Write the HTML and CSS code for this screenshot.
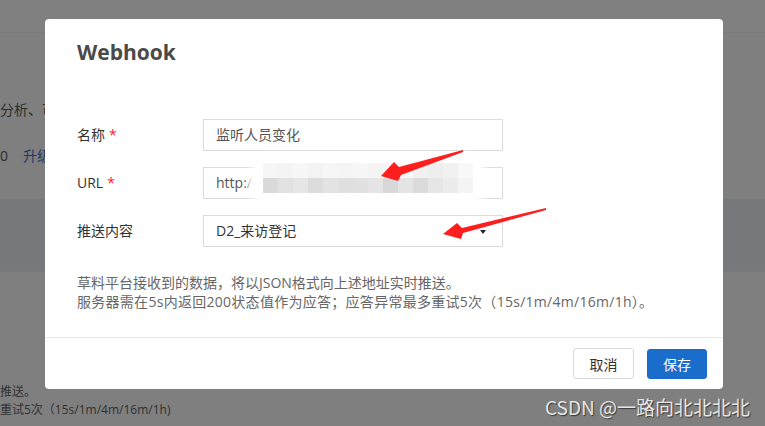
FILE: index.html
```html
<!DOCTYPE html>
<html lang="zh-CN">
<head>
<meta charset="utf-8">
<title>Webhook</title>
<link rel="stylesheet" href="styles.css">
</head>
<body>
<div class="page">
  <div class="pg-top"></div>
  <div class="pg-main">
    <p class="pg-line pg-l1">分析、可视化和数据对接</p>
    <p class="pg-line pg-l2"><span class="pg-num">0</span><span class="pg-link">升级版本</span></p>
  </div>
  <div class="pg-band"></div>
  <div class="pg-foot">
    <p class="pg-small pg-s1">推送。</p>
    <p class="pg-small">重试5次（15s/1m/4m/16m/1h)</p>
  </div>
</div>

<div class="modal">
  <div class="modal-head">
    <h2 class="modal-title">Webhook</h2>
  </div>
  <div class="modal-body">
    <div class="form">
      <label class="f-label">名称<span class="req">*</span></label>
      <div class="f-input">监听人员变化</div>
      <label class="f-label">URL<span class="req">*</span></label>
      <div class="f-input">http:/</div>
      <label class="f-label">推送内容</label>
      <div class="f-input f-select"><span class="sel-text">D2_来访登记</span><span class="caret"></span></div>
    </div>
    <p class="desc">草料平台接收到的数据，将以JSON格式向上述地址实时推送。<br><span class="desc-l2">服务器需在5s内返回200状态值作为应答；应答异常最多重试5次（15s/1m/4m/16m/1h）。</span></p>
  </div>
  <div class="modal-foot">
    <button class="btn btn-default">取消</button>
    <button class="btn btn-primary">保存</button>
  </div>
</div>

<svg class="marks" width="765" height="426" viewBox="0 0 765 426" xmlns="http://www.w3.org/2000/svg">
  <defs>
    <filter id="soft" x="-20%" y="-50%" width="140%" height="200%">
      <feGaussianBlur stdDeviation="3.5"/>
    </filter>
    <filter id="soft2" x="-5%" y="-20%" width="110%" height="140%">
      <feGaussianBlur stdDeviation="0.6"/>
    </filter>
  </defs>
  <rect x="248" y="156" width="240" height="51" rx="23" fill="#ffffff" filter="url(#soft)"/>
  <g filter="url(#soft2)">
    <rect x="263" y="163" width="15" height="15" fill="#f6f6f6"/>
    <rect x="278" y="163" width="15" height="15" fill="#f4f4f4"/>
    <rect x="293" y="163" width="15" height="15" fill="#f7f7f7"/>
    <rect x="308" y="163" width="15" height="15" fill="#f3f3f3"/>
    <rect x="323" y="163" width="15" height="15" fill="#f6f6f6"/>
    <rect x="338" y="163" width="15" height="15" fill="#f5f5f5"/>
    <rect x="353" y="163" width="15" height="15" fill="#f7f7f7"/>
    <rect x="368" y="163" width="15" height="15" fill="#f4f4f4"/>
    <rect x="383" y="163" width="15" height="15" fill="#f7f7f7"/>
    <rect x="398" y="163" width="15" height="15" fill="#f8f8f8"/>
    <rect x="413" y="163" width="15" height="15" fill="#f1f1f1"/>
    <rect x="428" y="163" width="15" height="15" fill="#eeeeee"/>
    <rect x="443" y="163" width="15" height="15" fill="#f1f1f1"/>
    <rect x="458" y="163" width="15" height="15" fill="#f8f8f8"/>
    <rect x="263" y="178" width="15" height="15" fill="#dadada"/>
    <rect x="278" y="178" width="15" height="15" fill="#e2e2e2"/>
    <rect x="293" y="178" width="15" height="15" fill="#e6e6e6"/>
    <rect x="308" y="178" width="15" height="15" fill="#dcdcdc"/>
    <rect x="323" y="178" width="15" height="15" fill="#e3e3e3"/>
    <rect x="338" y="178" width="15" height="15" fill="#dfdfdf"/>
    <rect x="353" y="178" width="15" height="15" fill="#e1e1e1"/>
    <rect x="368" y="178" width="15" height="15" fill="#e5e5e5"/>
    <rect x="383" y="178" width="15" height="15" fill="#d8d8d8"/>
    <rect x="398" y="178" width="15" height="15" fill="#e4e4e4"/>
    <rect x="413" y="178" width="15" height="15" fill="#dbdbdb"/>
    <rect x="428" y="178" width="15" height="15" fill="#e6e6e6"/>
    <rect x="443" y="178" width="15" height="15" fill="#ececec"/>
    <rect x="458" y="178" width="15" height="15" fill="#f4f4f4"/>
  </g>
  <polygon points="463,150 399,167 394,162 381,176 398,181 401,175 463,152" fill="#ff1e1e"/>
  <polygon points="546,208 462,228 457,223 443,234 461,239 463,233 546,210" fill="#ff1e1e"/>
</svg>

<div class="watermark">CSDN @一路向北北北北</div>
</body>
</html>
```

FILE: styles.css
```css
* { box-sizing: border-box; }
html, body { margin: 0; padding: 0; }
body {
  width: 765px;
  height: 426px;
  overflow: hidden;
  background: #7f7f7f;
  font-family: "Open Sans", "Noto Sans CJK SC", sans-serif;
  position: relative;
}

/* underlying (dimmed) page */
.page { display: flex; flex-direction: column; }
.pg-top { height: 33px; background: #808080; border-bottom: 1px solid #7a7a7a; }
.pg-main { height: 166px; background: #7f7f7f; padding-top: 67px; }
.pg-line { margin: 0; font-size: 14px; line-height: 20px; color: #2c2c2c; white-space: nowrap; }
.pg-l2 { margin-top: 26px; }
.pg-num { margin-right: 15px; }
.pg-link { color: #1d3a66; }
.pg-band { height: 73px; background: #77787b; border-bottom: 1px solid #7a7a7a; }
.pg-foot { padding-top: 111px; }
.pg-small { margin: 0; font-size: 12px; line-height: 17.5px; color: #303030; white-space: nowrap; }

/* modal */
.modal {
  position: absolute;
  left: 45px;
  top: 19px;
  width: 678px;
  height: 370px;
  background: #fff;
  border-radius: 4px;
  display: flex;
  flex-direction: column;
}
.modal-head { padding: 18px 32px 0; }
.modal-title {
  margin: 0;
  font-size: 21px;
  line-height: 30px;
  font-weight: 700;
  color: #4a4a4a;
}
.modal-body { flex: 1; padding: 52px 32px 0; }
.form {
  display: grid;
  grid-template-columns: 126px 300px;
  row-gap: 16px;
  align-items: center;
}
.f-label { font-size: 14px; line-height: 20px; color: #333; }
.req { color: #f5222d; margin-left: 4px; }
.f-input {
  height: 32px;
  border: 1px solid #dcdcdc;
  padding: 0 16px 0 12px;
  font-size: 14px;
  line-height: 30px;
  color: #555;
  display: flex;
  align-items: center;
}
.f-select { justify-content: space-between; color: #333; }
.caret {
  width: 0;
  height: 0;
  border-left: 3.5px solid transparent;
  border-right: 3.5px solid transparent;
  border-top: 4px solid #222;
  margin-top: 1px;
}
.desc {
  margin: 26px 0 0;
  font-size: 14px;
  line-height: 19px;
  color: #666;
}
.desc-l2 { letter-spacing: 0.28px; }
.modal-foot {
  border-top: 1px solid #e8e8e8;
  padding: 10px 16px 10px;
  display: flex;
  justify-content: flex-end;
  align-items: center;
  gap: 13px;
}
.btn {
  font-family: "Open Sans", "Noto Sans CJK SC", sans-serif;
  font-size: 14px;
  border-radius: 3px;
  padding: 0;
  cursor: pointer;
}
.btn-default {
  width: 61px;
  height: 31px;
  background: #fff;
  border: 1px solid #d9d9d9;
  color: #333;
}
.btn-primary {
  width: 60px;
  height: 30px;
  background: #1b6dcc;
  border: 1px solid #1b6dcc;
  color: #fff;
}

/* overlays */
.marks { position: absolute; left: 0; top: 0; pointer-events: none; }
.watermark {
  position: absolute;
  right: 15px;
  top: 395px;
  font-family: "Noto Sans CJK SC", sans-serif;
  font-size: 19px;
  line-height: 24px;
  color: #e6e6e6;
  text-shadow: 1px 1px 1px #3a3a3a;
  white-space: nowrap;
}
```
